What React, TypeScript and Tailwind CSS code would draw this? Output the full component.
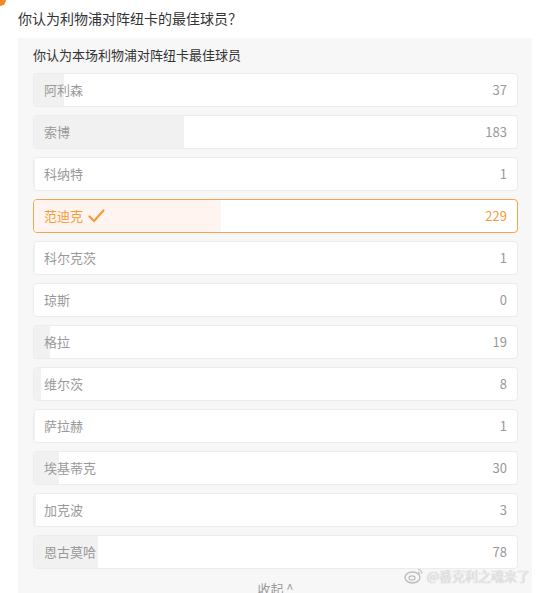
const options = [
  { name: "阿利森", votes: 37 },
  { name: "索博", votes: 183 },
  { name: "科纳特", votes: 1 },
  { name: "范迪克", votes: 229, selected: true },
  { name: "科尔克茨", votes: 1 },
  { name: "琼斯", votes: 0 },
  { name: "格拉", votes: 19 },
  { name: "维尔茨", votes: 8 },
  { name: "萨拉赫", votes: 1 },
  { name: "埃基蒂克", votes: 30 },
  { name: "加克波", votes: 3 },
  { name: "恩古莫哈", votes: 78 },
];

const total = options.reduce((s, o) => s + o.votes, 0);

function Check() {
  return (
    <svg width="17" height="14" viewBox="0 0 17 14" className="ml-[5px]">
      <path d="M1.5 7.5 L6 12 L15.5 1.5" fill="none" stroke="#f39c38" strokeWidth="2.2" strokeLinecap="round" strokeLinejoin="round" />
    </svg>
  );
}

export default function App() {
  return (
    <div
      className="relative h-[593px] w-[536px] overflow-hidden bg-white"
      style={{ fontFamily: '"Noto Sans CJK SC", "Noto Sans", sans-serif' }}
    >
      <div className="absolute -left-[6px] -top-[6px] h-[12px] w-[12px] rounded-full bg-[#f08a24]" />

      <div className="pl-[18px] pt-[8px] text-[14px] leading-[20px] text-[#333]">
        你认为利物浦对阵纽卡的最佳球员？
      </div>

      <div className="ml-[18px] mt-[10px] w-[514px] bg-[#f7f7f7] pb-[20px] pl-[15px] pr-[14px] pt-[7px]">
        <div className="text-[13px] leading-[20px] text-[#333]">你认为本场利物浦对阵纽卡最佳球员</div>
        <div className="mt-[8px] flex flex-col gap-[8px]">
          {options.map((o) => {
            const pct = (o.votes / total) * 100;
            return (
              <div
                key={o.name}
                className={
                  o.selected
                    ? "relative flex h-[34px] items-center overflow-hidden rounded-[4px] border border-[#f5a54e] bg-white"
                    : "relative flex h-[34px] items-center overflow-hidden rounded-[4px] border border-[#ececec] bg-white"
                }
              >
                <div
                  className={o.selected ? "absolute inset-y-0 left-0 bg-[#fff4f0]" : "absolute inset-y-0 left-0 bg-[#f1f1f1]"}
                  style={{ width: `${pct}%` }}
                />
                <div className="relative flex flex-1 items-center justify-between pl-[10px] pr-[10px] text-[13px]">
                  <span className={o.selected ? "flex items-center text-[#f39c38]" : "text-[#999]"}>
                    {o.name}
                    {o.selected && <Check />}
                  </span>
                  <span className={o.selected ? "text-[#f39c38]" : "text-[#999]"}>{o.votes}</span>
                </div>
              </div>
            );
          })}
        </div>
        <div className="mt-[10px] text-center text-[13px] text-[#999]">收起 ^</div>
      </div>

      <div className="absolute bottom-[8px] right-[6px] flex items-center gap-[3px] text-[13px] text-[#eaeaea] [text-shadow:0_0_1px_#aaa]">
        <svg width="20" height="17" viewBox="0 0 20 17">
          <ellipse cx="8.5" cy="10.5" rx="7.5" ry="5.5" fill="none" stroke="#bbb" strokeWidth="1.3" />
          <ellipse cx="8" cy="11" rx="3" ry="2.2" fill="none" stroke="#bbb" strokeWidth="1.2" />
          <path d="M14 2.5 A4 4 0 0 1 18 6.5" fill="none" stroke="#bbb" strokeWidth="1.2" />
          <path d="M14 5 A1.8 1.8 0 0 1 15.8 6.8" fill="none" stroke="#bbb" strokeWidth="1.1" />
        </svg>
        <span>@番克利之魂来了</span>
      </div>
    </div>
  );
}
